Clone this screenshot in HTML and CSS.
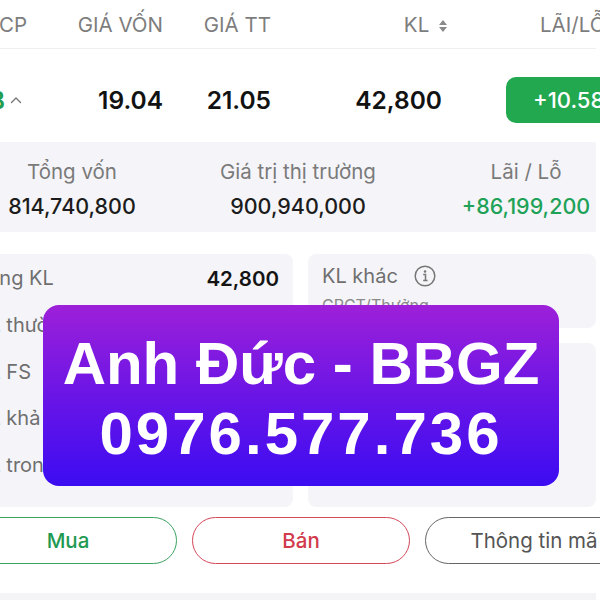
FILE: index.html
```html
<!DOCTYPE html>
<html lang="vi">
<head>
    <meta charset="UTF-8">
    <meta name="viewport" content="width=device-width, initial-scale=1.0">
    <title>Danh mục</title>
    <link rel="stylesheet" href="styles.css">
</head>
<body>
    <div class="screen">
        <div class="grid-row thead">
            <div class="c1">CP</div>
            <div class="c2">GIÁ VỐN</div>
            <div class="c3">GIÁ TT</div>
            <div class="c4">KL
                <svg class="sort" width="10" height="14" viewBox="0 0 10 14"><path d="M5 1L9 6H1Z M5 13L1 8H9Z" fill="#8a8a8a"/></svg>
            </div>
            <div class="c5">LÃI/LỖ</div>
        </div>

        <div class="grid-row trow">
            <div class="c1 ticker">
                <span class="code">ACB</span>
                <svg class="caret" width="12" height="8" viewBox="0 0 12 8"><path d="M1.5 6.5L6 2L10.5 6.5" fill="none" stroke="#777" stroke-width="1.4" stroke-linecap="round" stroke-linejoin="round"/></svg>
            </div>
            <div class="c2">19.04</div>
            <div class="c3">21.05</div>
            <div class="c4 kl">42,800</div>
            <div class="c5"><span class="pill">+10.58%</span></div>
        </div>

        <div class="summary">
            <div class="sum-col">
                <div class="sum-label">Tổng vốn</div>
                <div class="sum-value">814,740,800</div>
            </div>
            <div class="sum-col">
                <div class="sum-label">Giá trị thị trường</div>
                <div class="sum-value">900,940,000</div>
            </div>
            <div class="sum-col last">
                <div class="sum-label">Lãi / Lỗ</div>
                <div class="sum-value up">+86,199,200</div>
            </div>
        </div>

        <div class="cards">
            <div class="card card-main">
                <div class="line"><span>Tổng KL</span><b>42,800</b></div>
                <div class="line"><span>KL thường</span><b>42,800</b></div>
                <div class="line"><span>KL FS</span><b>0</b></div>
                <div class="line"><span>KL khả dụng</span><b>42,800</b></div>
                <div class="line"><span>KL trong ngày</span><b>0</b></div>
            </div>
            <div class="side">
                <div class="card card-other">
                    <div class="other-title">KL khác
                        <svg width="22" height="22" viewBox="0 0 22 22"><circle cx="11" cy="11" r="9.8" fill="none" stroke="#777" stroke-width="1.5"/><circle cx="11" cy="6.6" r="1.25" fill="#777"/><path d="M9.2 9.6H11.5V15.2M9.2 15.4H13.6" fill="none" stroke="#777" stroke-width="1.5"/></svg>
                    </div>
                    <div class="other-sub">CPCT/Thưởng</div>
                </div>
                <div class="card card-blank"></div>
            </div>
        </div>

        <div class="actions">
            <button class="btn buy">Mua</button>
            <button class="btn sell">Bán</button>
            <button class="btn info">Thông tin mã</button>
        </div>
        <div class="footer-band"></div>
    </div>

    <div class="promo">
        <div class="promo-name">Anh Đức - BBGZ</div>
        <div class="promo-phone">0976.577.736</div>
    </div>
</body>
</html>
```

FILE: styles.css
```css
body {
    margin: 0;
    width: 600px;
    height: 600px;
    overflow: hidden;
    background: #ffffff;
    font-family: Inter, "Noto Sans", sans-serif;
    position: relative;
}

.screen {
    margin-left: -41px;
    width: 637px;
}

.grid-row {
    display: grid;
    grid-template-columns: 71px 133px 108px 177px 220px;
    align-items: center;
}

.c2, .c3, .c4 {
    text-align: right;
}

.thead {
    height: 48px;
    border-bottom: 1px solid #efefef;
    font-size: 20.5px;
    color: #7d7d7d;
}

.thead .c1 {
    padding-left: 40px;
}

.thead .c5 {
    padding-left: 92px;
}

.sort {
    margin-left: 3px;
    vertical-align: -1px;
}

.trow {
    padding: 28px 0 19px;
    font-size: 24.5px;
    font-weight: 600;
    color: #121212;
}

.ticker {
    display: flex;
    justify-content: flex-end;
    align-items: center;
    gap: 5px;
    padding-right: 8px;
}

.ticker .code {
    color: #1f9d4f;
    flex-shrink: 0;
}

.caret {
    flex-shrink: 0;
}

.kl {
    padding-right: 6px;
}

.trow .c5 {
    padding-left: 58px;
}

.pill {
    display: inline-block;
    height: 46px;
    line-height: 46px;
    padding: 0 40px 0 27px;
    background: #22a84f;
    color: #ffffff;
    border-radius: 10px;
    font-size: 22px;
    font-weight: 500;
}

.summary {
    display: grid;
    grid-template-columns: 226px 226px 1fr;
    height: 90px;
    box-sizing: border-box;
    padding-top: 17px;
    background: #f5f5f9;
}

.sum-col {
    text-align: center;
}

.sum-col.last {
    padding-left: 45px;
}

.sum-label {
    font-size: 20.5px;
    color: #7a7a7a;
    line-height: 26px;
}

.sum-value {
    font-size: 21.5px;
    font-weight: 500;
    color: #1c1c1c;
    line-height: 30px;
    margin-top: 6px;
}

.sum-value.up {
    color: #1fa257;
}

.cards {
    display: grid;
    grid-template-columns: 334px 1fr;
    gap: 15px;
    margin-top: 22px;
}

.card {
    background: #f5f5f9;
    border-radius: 8px;
}

.card-main {
    padding: 1px 14px 18px 17px;
}

.line {
    display: flex;
    justify-content: space-between;
    align-items: center;
    height: 46.7px;
    font-size: 20px;
    color: #6f6f6f;
}

.line b {
    font-size: 20.5px;
    font-weight: 600;
    color: #141414;
}

.side {
    display: flex;
    flex-direction: column;
    gap: 15px;
}

.card-other {
    height: 74px;
    padding: 9px 14px 0;
    box-sizing: border-box;
}

.other-title {
    display: flex;
    align-items: center;
    gap: 16px;
    font-size: 20px;
    color: #6f6f6f;
    height: 26px;
}

.other-sub {
    font-size: 16px;
    color: #8a8a8a;
    margin-top: 6px;
}

.card-blank {
    height: 164px;
}

.actions {
    display: grid;
    grid-template-columns: 218px 218px 218px;
    gap: 15px;
    margin-top: 10px;
}

.btn {
    height: 47px;
    border-radius: 24px;
    background: #ffffff;
    font-family: Inter, "Noto Sans", sans-serif;
    font-size: 20.5px;
    border: 1.5px solid #666666;
    color: #555555;
}

.btn.buy {
    border-color: #3aa35f;
    color: #1f9a52;
    font-weight: 500;
}

.btn.sell {
    border-color: #d4485a;
    color: #d23a4d;
    font-weight: 500;
}

.footer-band {
    margin-top: 29px;
    height: 10px;
    background: #f4f4f6;
}

/* overlay banner */
.promo {
    position: absolute;
    left: 43px;
    top: 305px;
    width: 516px;
    height: 181px;
    box-sizing: border-box;
    padding-top: 24px;
    border-radius: 16px;
    background: linear-gradient(180deg, #9d20d9 0%, #6a15e6 50%, #3c0cf2 100%);
    color: #ffffff;
    font-family: "Liberation Sans", Arial, sans-serif;
    font-weight: bold;
    text-align: center;
}

.promo-name {
    font-size: 60px;
    line-height: 70px;
}

.promo-phone {
    font-size: 60px;
    line-height: 70px;
    letter-spacing: 3px;
}
```
